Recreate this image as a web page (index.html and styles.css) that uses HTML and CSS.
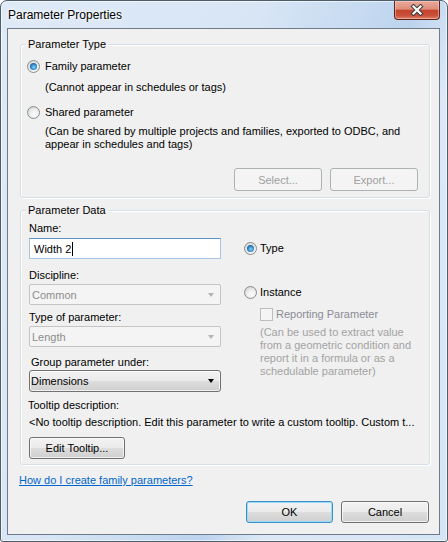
FILE: index.html
```html
<!DOCTYPE html>
<html>
<head>
<meta charset="utf-8">
<title>Parameter Properties</title>
<link rel="stylesheet" href="styles.css">
</head>
<body>
<div class="window">
  <div class="titlebar">
    <span class="title">Parameter Properties</span>
    <span class="close"><svg width="14" height="12" viewBox="0 0 14 12"><path d="M3.5 2.5 L10.5 9.5 M10.5 2.5 L3.5 9.5" stroke="#3b3b3b" stroke-width="4.2" stroke-linecap="square" fill="none"/><path d="M3.5 2.5 L10.5 9.5 M10.5 2.5 L3.5 9.5" stroke="#ffffff" stroke-width="2.2" stroke-linecap="square" fill="none"/></svg></span>
  </div>
  <div class="client">
    <div class="group group-type">
      <span class="legend">Parameter Type</span>
      <div class="radio-row"><span class="radio checked"></span><span>Family parameter</span></div>
      <div class="desc">(Cannot appear in schedules or tags)</div>
      <div class="radio-row shared"><span class="radio"></span><span>Shared parameter</span></div>
      <div class="desc multi">(Can be shared by multiple projects and families, exported to ODBC, and<br>appear in schedules and tags)</div>
      <div class="btn-row"><span class="btn disabled">Select...</span><span class="btn disabled">Export...</span></div>
    </div>
    <div class="group group-data">
      <span class="legend">Parameter Data</span>
      <div class="data-cols">
        <div class="col-left">
          <div class="label">Name:</div>
          <div class="textbox"><span>Width 2</span><span class="caret"></span></div>
          <div class="label discipline">Discipline:</div>
          <div class="combo disabled"><span>Common</span><span class="arrow"></span></div>
          <div class="label typeof">Type of parameter:</div>
          <div class="combo disabled"><span>Length</span><span class="arrow"></span></div>
          <div class="label groupunder">Group parameter under:</div>
          <div class="combo enabled"><span>Dimensions</span><span class="arrow"></span></div>
        </div>
        <div class="col-right">
          <div class="radio-row type"><span class="radio checked"></span><span>Type</span></div>
          <div class="radio-row instance"><span class="radio"></span><span>Instance</span></div>
          <div class="check-row"><span class="checkbox"></span><span>Reporting Parameter</span></div>
          <div class="note">(Can be used to extract value<br>from a geometric condition and<br>report it in a formula or as a<br>schedulable parameter)</div>
        </div>
      </div>
      <div class="label tooltip-label">Tooltip description:</div>
      <div class="tooltip-text">&lt;No tooltip description. Edit this parameter to write a custom tooltip. Custom t...</div>
      <span class="btn edit">Edit Tooltip...</span>
    </div>
    <a class="help-link" href="#">How do I create family parameters?</a>
    <div class="footer"><span class="btn default ok">OK</span><span class="btn cancel">Cancel</span></div>
  </div>
</div>
</body>
</html>
```

FILE: styles.css
```css
* { box-sizing: border-box; }
html, body { margin: 0; padding: 0; }
body {
  width: 448px;
  height: 542px;
  background: #ffffff;
  font-family: "Liberation Sans", Arial, sans-serif;
  font-size: 11px;
  color: #000;
  overflow: hidden;
}
.window {
  width: 448px;
  height: 542px;
  border: 1px solid #4f5c69;
  border-radius: 7px 7px 3px 3px;
  background: linear-gradient(112deg, #dfeaf7 0%, #d7e5f5 40%, #c3d8f0 58%, #bcd3ee 63%, #dce8f6 72%, #d6e5f5 100%);
  box-shadow: inset 0 0 0 1px rgba(255,255,255,0.6);
  padding: 0 7px 6px 6px;
  display: flex;
  flex-direction: column;
}
.titlebar {
  height: 27px;
  display: flex;
  justify-content: space-between;
  align-items: flex-start;
  padding-left: 1px;
}
.title {
  margin-top: 7px;
  font-size: 12px;
  line-height: 14px;
  color: #000;
  text-shadow: 0 0 6px #fff, 0 0 3px #fff;
}
.close {
  width: 46px;
  height: 19px;
  border: 1px solid #5e2219;
  border-top: none;
  border-radius: 0 0 4px 4px;
  background: linear-gradient(#e9aa9b 0%, #de8d7b 45%, #c5452c 52%, #c9503a 80%, #df7d66 100%);
  box-shadow: inset 0 0 0 1px rgba(255,225,215,0.45);
  display: flex;
  align-items: center;
  justify-content: center;
}
.close svg { display: block; }
.client {
  height: 507px;
  border: 1px solid #6e7b88;
  background: #f0f0f0;
  display: flex;
  flex-direction: column;
  align-items: flex-start;
}
.group {
  position: relative;
  margin-left: 12px;
  width: 410px;
  border: 1px solid #d5dfe5;
  border-radius: 3px;
  box-shadow: inset 1px 1px 0 #fff, 1px 1px 0 #fff;
}
.legend {
  position: absolute;
  top: -7px;
  left: 5px;
  padding: 0 2px;
  background: #f0f0f0;
  line-height: 13px;
}
.group-type {
  margin-top: 15px;
  padding: 14px 11px 6px 6px;
}
.radio-row {
  display: flex;
  align-items: center;
  height: 14px;
  line-height: 14px;
  gap: 5px;
}
.radio {
  position: relative;
  width: 13px;
  height: 13px;
  border-radius: 50%;
  border: 1px solid #8a8c8e;
  background: radial-gradient(circle at 60% 65%, #fbfbfb 0%, #f0f0f0 40%, #d8d8d8 75%, #cfcfcf 100%);
  flex: none;
}
.radio.checked::after {
  content: "";
  position: absolute;
  left: 2px;
  top: 2px;
  width: 7px;
  height: 7px;
  border-radius: 50%;
  background: radial-gradient(circle at 55% 60%, #8fd6fb 0%, #3a93d3 40%, #1d5d97 75%, #17466f 100%);
}
.desc {
  margin: 7px 0 0 18px;
  line-height: 14px;
}
.radio-row.shared { margin-top: 11px; }
.desc.multi {
  margin-top: 6px;
  line-height: 13px;
}
.btn-row {
  display: flex;
  justify-content: flex-end;
  gap: 8px;
  margin-top: 17px;
}
.btn {
  display: flex;
  align-items: center;
  justify-content: center;
  height: 22px;
  border: 1px solid #707070;
  border-radius: 3px;
  background: linear-gradient(#f2f2f2 0%, #ebebeb 48%, #dddddd 52%, #cfcfcf 100%);
  box-shadow: inset 0 0 0 1px rgba(255,255,255,0.7);
  color: #000;
  line-height: 14px;
}
.btn-row .btn { width: 88px; height: 23px; }
.btn.disabled {
  border-color: #adb2b5;
  background: #f4f4f4;
  box-shadow: none;
  color: #a0a0a0;
}
.group-data {
  margin-top: 12px;
  padding: 10px 6px 5px 8px;
}
.data-cols {
  display: flex;
  align-items: flex-start;
}
.col-left {
  width: 192px;
  display: flex;
  flex-direction: column;
}
.label {
  line-height: 14px;
  height: 14px;
}
.textbox {
  margin-top: 3px;
  height: 21px;
  border: 1px solid #a6c4e3;
  border-top-color: #5b93c9;
  background: #fff;
  display: flex;
  align-items: center;
  padding-left: 4px;
}
.caret {
  width: 1px;
  height: 14px;
  background: #000;
  margin-left: 1px;
}
.label.discipline { margin-top: 9px; }
.combo {
  margin-top: 2px;
  height: 21px;
  display: flex;
  align-items: center;
  padding: 0 6px 0 2px;
  border-radius: 2px;
}
.combo.disabled {
  border: 1px solid #c4c4c4;
  background: #f4f4f4;
  color: #8d8d8d;
}
.combo .arrow {
  margin-left: auto;
  width: 0;
  height: 0;
  border-left: 3.5px solid transparent;
  border-right: 3.5px solid transparent;
  border-top: 4px solid #b4b4b4;
}
.label.typeof { margin-top: 5px; }
.label.groupunder { margin-top: 8px; margin-left: 2px; }
.combo.enabled {
  margin-top: 1px;
  height: 22px;
  padding-left: 1px;
  border: 1px solid #707070;
  border-radius: 3px;
  background: linear-gradient(#f2f2f2 0%, #ebebeb 48%, #dddddd 52%, #cfcfcf 100%);
  box-shadow: inset 0 0 0 1px rgba(255,255,255,0.7);
  color: #000;
}
.combo.enabled .arrow { border-top-color: #000; }
.col-right {
  margin-left: 23px;
  display: flex;
  flex-direction: column;
}
.col-right .radio-row { gap: 3px; }
.radio-row.type { margin-top: 20px; }
.radio-row.instance { margin-top: 30px; }
.check-row {
  margin-top: 8px;
  margin-left: 16px;
  display: flex;
  align-items: center;
  gap: 3px;
  height: 14px;
  line-height: 14px;
  color: #8b8b96;
}
.checkbox {
  width: 13px;
  height: 13px;
  border: 1px solid #bcbcbc;
  background: #f4f4f4;
  flex: none;
}
.note {
  margin: 5px 0 0 16px;
  line-height: 13px;
  color: #a3a3a3;
}
.tooltip-label {
  margin-top: 6px;
  margin-left: -1px;
}
.tooltip-text {
  margin-top: 3px;
  line-height: 14px;
  white-space: nowrap;
}
.btn.edit {
  margin-top: 8px;
  width: 96px;
  height: 22px;
}
.help-link {
  margin: 8px 0 0 11px;
  line-height: 14px;
  color: #0066cc;
  text-decoration: underline;
}
.footer {
  align-self: stretch;
  margin-top: 14px;
  display: flex;
  justify-content: flex-end;
  gap: 8px;
  padding-right: 10px;
}
.footer .btn { height: 22px; }
.btn.ok { width: 87px; }
.btn.cancel { width: 88px; }
.btn.default {
  border-color: #3c8fc8;
  box-shadow: inset 0 0 0 1px #9ed9f6;
}
```
